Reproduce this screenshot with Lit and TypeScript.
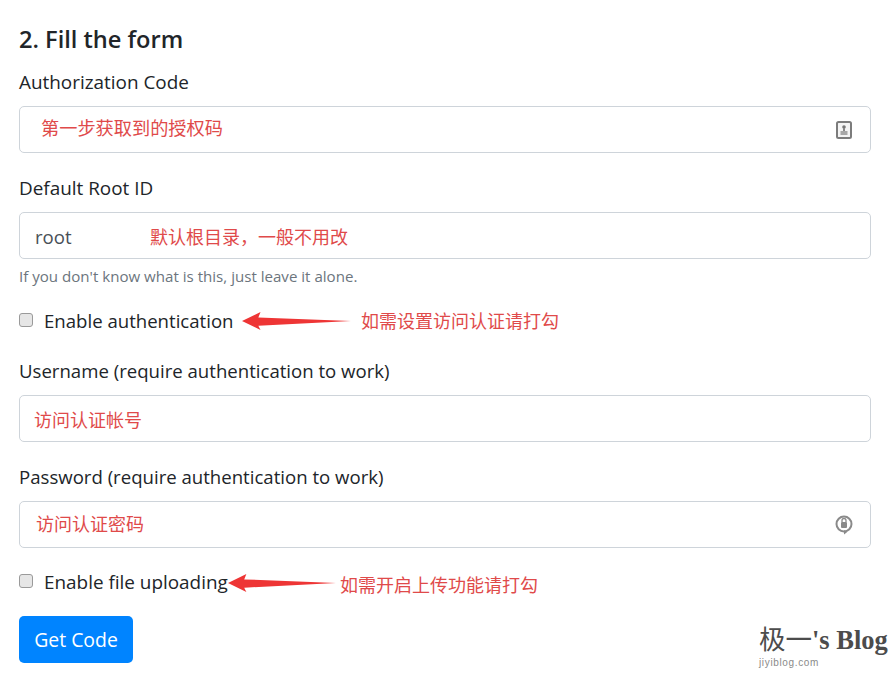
import { LitElement, html, css, svg } from "lit";
import { customElement } from "lit/decorators.js";

const arrow = (w: number, h: number) => svg`<svg class="arrow-svg" width=${w} height=${h} viewBox="0 0 ${w} ${h}"><path d="M0 ${h / 2} L${w * 0.17} 0 L${w * 0.15} ${h * 0.3} L${w} ${h * 0.5} L${w * 0.15} ${h * 0.76} L${w * 0.17} ${h} Z" fill="#ee3535"/></svg>`;

@customElement("app-root")
export class AppRoot extends LitElement {
  static styles = css`
    :host { display: block; position: relative; width: 894px; height: 677px; overflow: hidden; background: #fff; color: #212529; font-family: "Open Sans", "Noto Sans CJK SC", sans-serif; font-size: 18.6px; }
    * { box-sizing: border-box; }
    .form { display: flex; flex-direction: column; padding: 22px 23px 0 19px; }
    h2 { margin: 0 0 12px; font-size: 23.6px; line-height: 34px; font-weight: 600; }
    label.block { display: block; line-height: 28px; height: 28px; margin-bottom: 10px; }
    label.wide { font-size: 18.9px; }
    .group { margin-bottom: 21px; }
    .g-help { margin-bottom: 20px; }
    .g-check { margin-bottom: 23px; }
    .g-pass { margin-bottom: 19px; }
    .field { display: flex; align-items: center; height: 47px; border: 1px solid #ced4da; border-radius: 5px; padding: 0 18px 0 15px; justify-content: space-between; }
    .field-lock { padding-right: 17px; }
    .value { color: #495057; padding-top: 2px; }
    .help { font-size: 15.1px; color: #6c757d; line-height: 20px; margin-top: 7px; }
    .check { display: flex; align-items: center; height: 28px; gap: 11px; }
    .upload { font-size: 18.9px; padding-top: 2px; }
    .box { width: 14px; height: 14px; border: 1px solid #9a9a9a; border-radius: 3px; background: #e6e6e6; flex: none; }
    .btn { width: 114px; height: 47px; background: #0084ff; color: #fff; border-radius: 5px; display: flex; align-items: center; justify-content: center; font-size: 19.4px; }
    .note { position: absolute; color: #e04a4a; font-family: "Noto Sans CJK SC", sans-serif; font-size: 18px; line-height: 24px; white-space: nowrap; }
    .n1 { left: 41px; top: 115px; font-size: 18.2px; }
    .n2 { left: 150px; top: 224px; }
    .n3 { left: 361px; top: 308px; }
    .n4 { left: 34px; top: 407px; }
    .n5 { left: 36px; top: 511px; }
    .n6 { left: 340px; top: 572px; }
    .arrow { position: absolute; line-height: 0; }
    .a1 { left: 242px; top: 312px; }
    .a2 { left: 228px; top: 574px; }
    .arrow-svg { display: block; }
    .wm { position: absolute; left: 759px; top: 624px; color: #4c4c4c; font-family: "Liberation Serif", "Noto Sans CJK SC", serif; font-weight: 700; font-size: 26.5px; line-height: 32px; white-space: nowrap; }
    .wm-cjk { font-weight: 400; }
    .wm-sub { position: absolute; left: 759px; top: 656px; color: #8a8a8a; font-family: "Liberation Sans", sans-serif; font-size: 10px; line-height: 14px; letter-spacing: 0.65px; }
    .ic { flex: none; }
  `;

  render() {
    return html`
      <div class="form">
        <h2>2. Fill the form</h2>
        <div class="group">
          <label class="block wide">Authorization Code</label>
          <div class="field"><span></span>
            <svg class="ic" width="16" height="18" viewBox="0 0 16 18"><rect x="1" y="1" width="14" height="16" rx="1.5" fill="#f4f4f4" stroke="#7c7c7c" stroke-width="2"/><circle cx="8" cy="6" r="1.8" fill="#777"/><path d="M7 7h2v3H7z" fill="#888"/><rect x="4.5" y="10" width="7" height="4" fill="#a8a8a8"/></svg>
          </div>
        </div>
        <div class="group g-help">
          <label class="block wide">Default Root ID</label>
          <div class="field"><span class="value">root</span></div>
          <div class="help">If you don't know what is this, just leave it alone.</div>
        </div>
        <div class="g-check"><div class="check"><span class="box"></span><span>Enable authentication</span></div></div>
        <div class="group">
          <label class="block">Username (require authentication to work)</label>
          <div class="field"></div>
        </div>
        <div class="g-pass">
          <label class="block">Password (require authentication to work)</label>
          <div class="field field-lock"><span></span>
            <svg class="ic" width="18" height="20" viewBox="0 0 18 20"><circle cx="9" cy="9" r="7.5" fill="none" stroke="#8a8a8a" stroke-width="2"/><rect x="6" y="7" width="6" height="6" rx="1" fill="#8a8a8a"/><path d="M7 7V5.5a2 2 0 0 1 4 0V7" fill="none" stroke="#8a8a8a" stroke-width="1.3"/><path d="M9 15l3 2.2-3 2.3z" fill="#8a8a8a"/></svg>
          </div>
        </div>
        <div class="group"><div class="check"><span class="box"></span><span class="upload">Enable file uploading</span></div></div>
        <div class="btn">Get Code</div>
      </div>
      <span class="note n1">第一步获取到的授权码</span>
      <span class="note n2">默认根目录，一般不用改</span>
      <span class="note n3">如需设置访问认证请打勾</span>
      <span class="note n4">访问认证帐号</span>
      <span class="note n5">访问认证密码</span>
      <span class="note n6">如需开启上传功能请打勾</span>
      <span class="arrow a1">${arrow(109, 18)}</span>
      <span class="arrow a2">${arrow(108, 18)}</span>
      <div class="wm"><span class="wm-cjk">极一</span>'s Blog</div>
      <div class="wm-sub">jiyiblog.com</div>
    `;
  }
}
